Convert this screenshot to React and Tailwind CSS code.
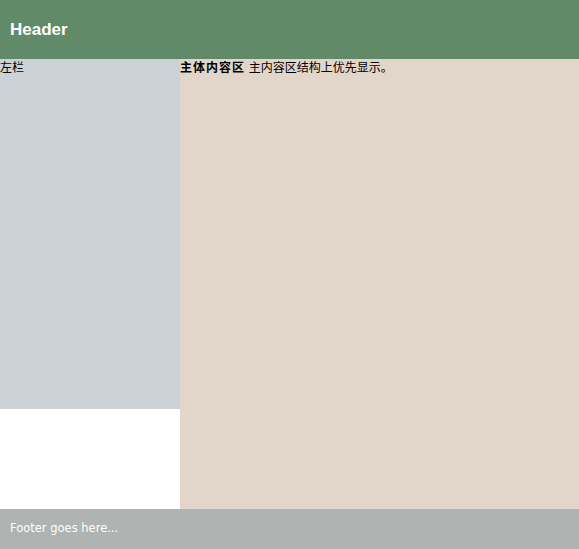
export default function App() {
  return (
    <div className="w-[579px] text-[12px] text-black" style={{ fontFamily: '"DejaVu Sans", "Noto Sans CJK SC", sans-serif' }}>
      <header className="h-[59px] bg-[#618b68] flex items-center px-[10px]">
        <h1 className="text-[17px] font-bold text-white font-['Liberation_Sans',sans-serif]">Header</h1>
      </header>

      <div className="flex items-start">
        <aside className="w-[180px] h-[350px] bg-[#ccd2d5] leading-[19px]">左栏</aside>
        <main className="flex-1 h-[450px] bg-[#e2d6ca] leading-[19px]">
          <b className="tracking-[1px]">主体内容区</b> 主内容区结构上优先显示。
        </main>
      </div>

      <footer className="h-[40px] bg-[#afb3b1] flex items-center px-[10px] text-[11.5px] text-white">
        Footer goes here...
      </footer>
    </div>
  );
}
